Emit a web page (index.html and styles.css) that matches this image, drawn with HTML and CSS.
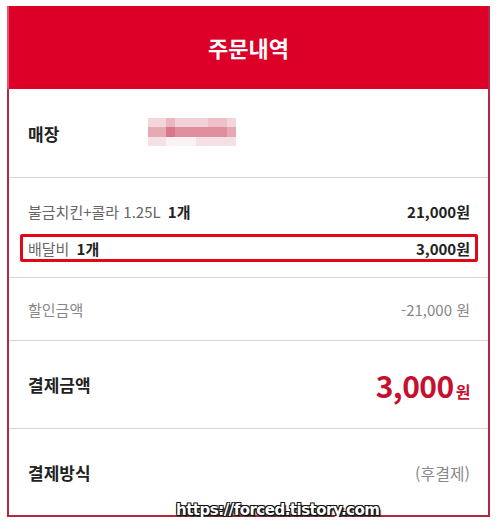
FILE: index.html
```
<!DOCTYPE html>
<html lang="ko">
<head>
<meta charset="utf-8">
<link rel="stylesheet" href="styles.css">
</head>
<body>
<div class="card">
  <div class="header">주문내역</div>
  <div class="row store">
    <span class="label">매장</span>
    <div class="blur">
      <div class="b r1"></div>
      <div class="b r2"></div>
      <div class="b r3"></div>
    </div>
  </div>
  <div class="items">
    <div class="item">
      <span class="name">불금치킨+콜라 1.25L <b>1개</b></span>
      <span class="price">21,000원</span>
    </div>
    <div class="item hl">
      <span class="name">배달비 <b>1개</b></span>
      <span class="price">3,000원</span>
    </div>
  </div>
  <div class="row discount">
    <span class="dlabel">할인금액</span>
    <span class="dval">-21,000 원</span>
  </div>
  <div class="row total">
    <span class="label">결제금액</span>
    <span class="tval">3,000<small>원</small></span>
  </div>
  <div class="row pay">
    <span class="label">결제방식</span>
    <span class="pval">(후결제)</span>
  </div>
  <div class="wm">https://forced.tistory.com</div>
</div>
</body>
</html>
```
FILE: styles.css
```
* { box-sizing: border-box; }
body {
  margin: 0;
  background: #fff;
  font-family: "Noto Sans CJK KR", "Noto Sans", sans-serif;
  color: #222;
}
.card {
  position: relative;
  margin: 6px 6px 0 7px;
  border: 2px solid #b3283f;
  border-top: 0;
  height: 511px;
}
.header {
  height: 83px;
  margin: 0 -2px;
  background: #dc0028;
  border-left: 2px solid #e2566c;
  border-right: 2px solid #b3283f;
  color: #fff;
  font-size: 22px;
  font-weight: 700;
  display: flex;
  align-items: center;
  justify-content: center;
  padding-bottom: 2px;
}
.row {
  display: flex;
  align-items: center;
  justify-content: space-between;
  padding: 0 18px 0 19px;
  border-bottom: 1px solid #d6d6d6;
}
.store { height: 89px; justify-content: flex-start; }
.label { font-size: 17px; font-weight: 700; color: #222; }
.blur {
  margin-left: 89px;
  width: 88px;
  height: 28px;
  display: flex;
  flex-direction: column;
  margin-top: -2px;
}
.b { flex: 1; }
.r1 { background: linear-gradient(90deg, #f3d6dc 0 20%, #ebb6c0 20% 31%, #f2d2d9 31% 68%, #edc0ca 68% 90%, #f3d6dc 90%); }
.r2 { background: linear-gradient(90deg, #e6aab5 0 20%, #d7788a 20% 31%, #df8e9b 31% 90%, #e6a8b3 90%); }
.r3 { background: linear-gradient(90deg, #f5e1e5 0 20%, #fbf2f3 20% 55%, #f5e1e5 55%); }
.items {
  padding: 19px 10px 15px 11px;
  border-bottom: 1px solid #d6d6d6;
  display: flex;
  flex-direction: column;
  gap: 9px;
}
.item {
  display: flex;
  justify-content: space-between;
  align-items: center;
  height: 28px;
  padding: 0 8px;
  font-size: 15px;
}
.item .name { color: #666; }
.item .name b { color: #222; font-weight: 700; margin-left: 3px; }
.item .price { font-weight: 700; color: #222; }
.item.hl {
  border: 3px solid #df0a17;
  border-radius: 2px;
  padding: 0 5px;
}
.discount { height: 63px; font-size: 15px; color: #888; }
.total { height: 88px; }
.tval {
  color: #c5102f;
  font-size: 30px;
  font-weight: 700;
  letter-spacing: -0.5px;
}
.tval small { font-size: 16px; margin-left: 2px; }
.pay { height: 87px; border-bottom: 0; }
.pval { font-size: 16px; color: #888; }
.wm {
  position: absolute;
  left: 167px;
  bottom: -4px;
  font-family: "DejaVu Sans", sans-serif;
  font-weight: 700;
  font-size: 15px;
  letter-spacing: -0.5px;
  color: #fff;
  text-shadow: -1px -1px 0 #111, 1px -1px 0 #111, -1px 1px 0 #111, 1px 1px 0 #111, 2px 2px 1px #333;
}
```
